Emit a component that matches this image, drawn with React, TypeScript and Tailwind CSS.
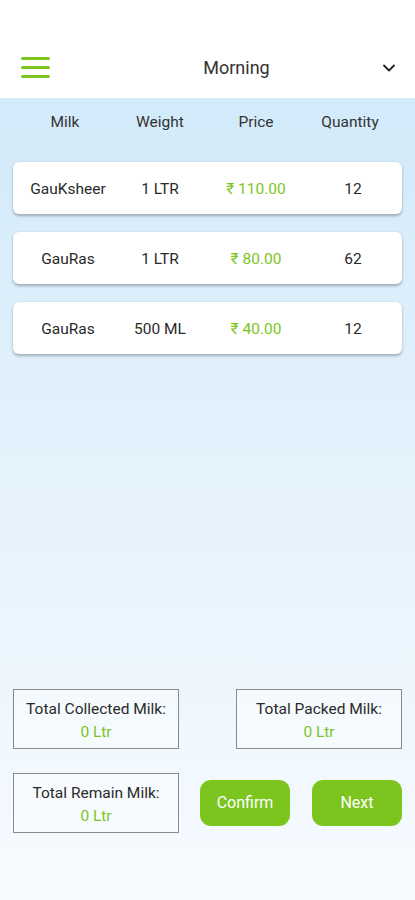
import { ChevronDown } from "lucide-react";

type MilkRow = {
  name: string;
  weight: string;
  price: string;
  qty: string;
};

const rows: MilkRow[] = [
  { name: "GauKsheer", weight: "1 LTR", price: "₹ 110.00", qty: "12" },
  { name: "GauRas", weight: "1 LTR", price: "₹ 80.00", qty: "62" },
  { name: "GauRas", weight: "500 ML", price: "₹ 40.00", qty: "12" },
];

const cols = "grid grid-cols-[110px_74px_118px_76px] items-center text-center";

function TotalBox({ label }: { label: string }) {
  return (
    <div className="flex h-[60px] w-[166px] flex-col items-center justify-center border-[1.5px] border-[#8a8a8a] bg-white/40 pt-[3px]">
      <span className="text-[15.5px] leading-[23px] text-[#2a2a2a]">{label}</span>
      <span className="text-[15.5px] leading-[23px] text-[#7cc51f]">0 Ltr</span>
    </div>
  );
}

export default function App() {
  return (
    <div
      className="flex h-[900px] w-[415px] flex-col overflow-hidden bg-white"
      style={{ fontFamily: "Roboto, 'Noto Sans', sans-serif" }}
    >
      <header className="flex h-[98px] shrink-0 items-center justify-between px-[21px] pt-[37px]">
        <div className="flex w-[29px] flex-col gap-[6.5px]">
          <span className="block h-[2.5px] rounded-full bg-[#7cc51f]" />
          <span className="block h-[2.5px] rounded-full bg-[#7cc51f]" />
          <span className="block h-[2.5px] rounded-full bg-[#7cc51f]" />
        </div>
        <span className="ml-[44px] text-[18px] text-[#333]">Morning</span>
        <ChevronDown size={20} strokeWidth={2.2} className="mr-[-5px] text-[#222]" />
      </header>

      <main className="flex flex-1 flex-col bg-[linear-gradient(180deg,#d2eafa_0%,#e4f2fc_45%,#f7fbff_100%)] px-[13px]">
        <div className={`${cols} h-[50px] text-[15.5px] text-[#333]`}>
          <span className="pr-[6px]">Milk</span>
          <span>Weight</span>
          <span>Price</span>
          <span className="pr-[6px]">Quantity</span>
        </div>

        <div className="mt-[14px] flex flex-col gap-[18px]">
          {rows.map((row, i) => (
            <div
              key={i}
              className={`${cols} h-[52px] rounded-[6px] bg-white pt-[3px] text-[15.5px] text-[#2a2a2a] shadow-[0_1.5px_3px_rgba(0,0,0,0.28)]`}
            >
              <span>{row.name}</span>
              <span>{row.weight}</span>
              <span className="text-[#7cc51f]">{row.price}</span>
              <span>{row.qty}</span>
            </div>
          ))}
        </div>

        <div className="flex-1" />

        <div className="flex justify-between">
          <TotalBox label="Total Collected Milk:" />
          <TotalBox label="Total Packed Milk:" />
        </div>

        <div className="mb-[67px] mt-[24px] flex items-center">
          <TotalBox label="Total Remain Milk:" />
          <button
            type="button"
            className="ml-[21px] h-[46px] w-[90px] rounded-[11px] bg-[#7cc51f] text-[16px] text-white"
          >
            Confirm
          </button>
          <button
            type="button"
            className="ml-auto h-[46px] w-[90px] rounded-[11px] bg-[#7cc51f] text-[16px] text-white"
          >
            Next
          </button>
        </div>
      </main>
    </div>
  );
}
